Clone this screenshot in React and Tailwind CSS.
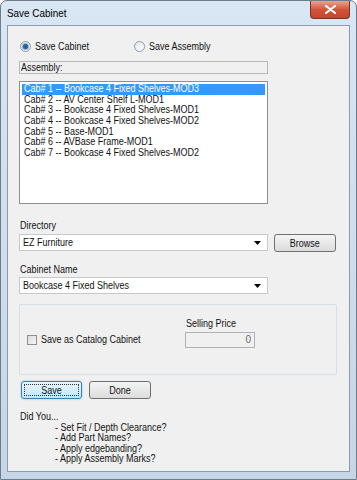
import React from "react";

const items = [
  "Cab# 1 -- Bookcase 4 Fixed Shelves-MOD3",
  "Cab# 2 -- AV Center Shelf L-MOD1",
  "Cab# 3 -- Bookcase 4 Fixed Shelves-MOD1",
  "Cab# 4 -- Bookcase 4 Fixed Shelves-MOD2",
  "Cab# 5 -- Base-MOD1",
  "Cab# 6 -- AVBase Frame-MOD1",
  "Cab# 7 -- Bookcase 4 Fixed Shelves-MOD2",
];

// the dialog font is narrower than Arial, so squeeze text horizontally
function T({ children, c }) {
  return (
    <span className={"inline-block whitespace-nowrap scale-x-[0.9] " + (c ? "origin-center" : "origin-left")}>
      {children}
    </span>
  );
}

function Radio({ checked, label }) {
  return (
    <div className="flex items-center gap-[4px]">
      <div className="w-[11px] h-[11px] rounded-full border border-[#8e9aa6] bg-gradient-to-br from-[#e4e8ec] to-[#fbfbfb] flex items-center justify-center">
        {checked && <div className="w-[5px] h-[5px] rounded-full bg-[#2c5f8e] shadow-[0_0_1px_1px_#7fb0d8]" />}
      </div>
      <T>{label}</T>
    </div>
  );
}

function Arrow() {
  return (
    <svg width="7" height="4" viewBox="0 0 7 4">
      <path d="M0 0h7L3.5 4z" fill="#000" />
    </svg>
  );
}

function Combo({ value }) {
  return (
    <div className="w-[249px] h-[17px] bg-white border border-[#c5c9ce] flex items-center pl-[3px] pr-[6px]">
      <span className="flex-1">
        <T>{value}</T>
      </span>
      <Arrow />
    </div>
  );
}

export default function App() {
  return (
    <div
      className="w-[357px] h-[480px] bg-gradient-to-b from-[#d9e6f3] to-[#c6d6e6] border border-[#6d7b8a] rounded-t-[7px] flex flex-col text-[10px] text-[#111] leading-[11px]"
      style={{ fontFamily: '"Liberation Sans", Arial, sans-serif' }}
    >
      {/* title bar */}
      <div className="h-[24px] flex items-start">
        <span className="ml-[6px] mt-[6px] text-[11px] leading-[13px] text-black">
          <T>Save Cabinet</T>
        </span>
        <div className="ml-auto mr-[6px] w-[40px] h-[18px] rounded-b-[4px] border border-t-0 border-[#7a3326] bg-gradient-to-b from-[#e8a493] via-[#d3543a] to-[#c6452c] flex items-center justify-center">
          <svg width="11" height="9" viewBox="0 0 11 9">
            <path d="M1 1l9 7M10 1l-9 7" stroke="#fff" strokeWidth="2.2" strokeLinecap="round" />
          </svg>
        </div>
      </div>

      {/* client area */}
      <div className="mx-[6px] h-[447px] bg-[#f0f0f0] border border-[#8c9bab] flex flex-col pl-[11px]">
        <div className="mt-[14px] h-[12px] flex items-center">
          <div className="ml-[1px] w-[114px]">
            <Radio checked label="Save Cabinet" />
          </div>
          <Radio label="Save Assembly" />
        </div>

        <div className="mt-[9px] w-[249px] h-[13px] border border-[#b5b9bd] bg-[#f0f0f0] flex items-center pl-[1px]">
          <T>Assembly:</T>
        </div>

        <div className="mt-[7px] w-[249px] h-[123px] bg-white border border-[#8a8f94] pt-[2px] px-[2px] flex flex-col">
          {items.map((it, i) => (
            <div
              key={i}
              className={
                "h-[10.7px] leading-[10.7px] pl-[2px] whitespace-nowrap " +
                (i === 0 ? "bg-[#3399ff] text-white" : "")
              }
            >
              <T>{it}</T>
            </div>
          ))}
        </div>

        <div className="mt-[16px] pl-[1px]">
          <T>Directory</T>
        </div>
        <div className="mt-[2px] flex items-center gap-[6px]">
          <Combo value="EZ Furniture" />
          <div className="w-[62px] h-[18px] mt-[1px] rounded-[3px] border border-[#707070] bg-gradient-to-b from-[#f4f4f4] to-[#dcdcdc] flex items-center justify-center">
            <T c>Browse</T>
          </div>
        </div>

        <div className="mt-[12px] pl-[1px]">
          <T>Cabinet Name</T>
        </div>
        <div className="mt-[2px]">
          <Combo value="Bookcase 4 Fixed Shelves" />
        </div>

        <div className="mt-[10px] w-[318px] h-[71px] border border-[#d5dfe5] rounded-[2px] flex items-center pl-[7px]">
          <div className="flex items-center gap-[4px] w-[158px]">
            <div className="w-[10px] h-[10px] border border-[#8f8f8f] bg-gradient-to-br from-[#dcdcdc] to-[#f6f6f6]" />
            <T>Save as Catalog Cabinet</T>
          </div>
          <div className="flex flex-col mb-[14px]">
            <span className="pl-[1px]">
              <T>Selling Price</T>
            </span>
            <div className="mt-[3px] w-[70px] h-[16px] border border-[#aeb2b6] bg-[#f0f0f0] flex items-center justify-end pr-[3px] text-[#6d6d6d]">
              0
            </div>
          </div>
        </div>

        <div className="mt-[6px] flex gap-[7px] pl-[2px]">
          <div className="w-[61px] h-[18px] rounded-[3px] border border-[#3c7fb1] bg-gradient-to-b from-[#eaf6fd] to-[#bee6fd] shadow-[0_0_2px_#6fc0ef] p-[2px]">
            <div className="w-full h-full border border-dotted border-[#333] flex items-center justify-center">
              <T c>Save</T>
            </div>
          </div>
          <div className="w-[62px] h-[18px] rounded-[3px] border border-[#707070] bg-gradient-to-b from-[#f4f4f4] to-[#dcdcdc] flex items-center justify-center">
            <T c>Done</T>
          </div>
        </div>

        <div className="mt-[13px] pl-[1px] flex flex-col leading-[10.5px]">
          <T>Did You...</T>
          <span className="pl-[35px]">
            <T>- Set Fit / Depth Clearance?</T>
          </span>
          <span className="pl-[35px]">
            <T>- Add Part Names?</T>
          </span>
          <span className="pl-[35px]">
            <T>- Apply edgebanding?</T>
          </span>
          <span className="pl-[35px]">
            <T>- Apply Assembly Marks?</T>
          </span>
        </div>
      </div>
    </div>
  );
}
